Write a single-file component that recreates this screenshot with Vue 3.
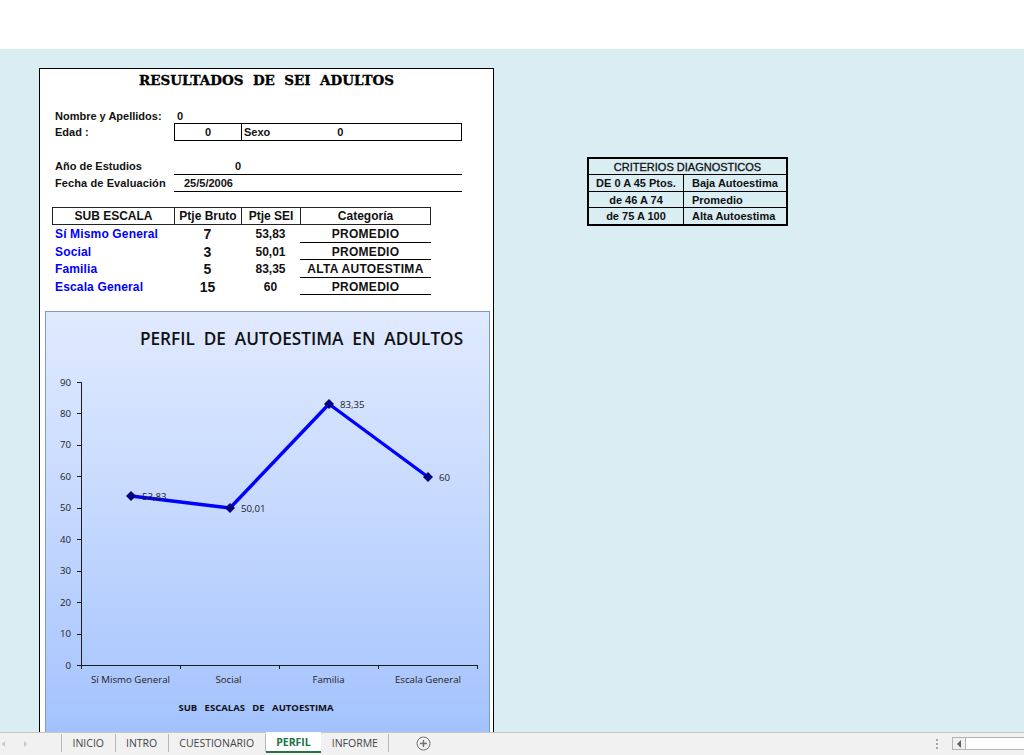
<script setup>
const rows = [
  { name: 'Sí Mismo General', raw: 7, sei: '53,83', cat: 'PROMEDIO' },
  { name: 'Social', raw: 3, sei: '50,01', cat: 'PROMEDIO' },
  { name: 'Familia', raw: 5, sei: '83,35', cat: 'ALTA AUTOESTIMA' },
  { name: 'Escala General', raw: 15, sei: '60', cat: 'PROMEDIO' }
]

const criterios = [
  ['DE 0 A 45 Ptos.', 'Baja Autoestima'],
  ['de 46 A 74', 'Promedio'],
  ['de 75 A 100', 'Alta Autoestima']
]

const tabs = ['INICIO', 'INTRO', 'CUESTIONARIO', 'PERFIL', 'INFORME']

// chart geometry, in page pixels (the svg viewBox starts at the chart corner)
const axisX = 81
const axisY = 665
const stepY = 31.44
const stepX = 99
const ticksY = [0, 10, 20, 30, 40, 50, 60, 70, 80, 90]
const pts = [
  { x: 131, y: 496, label: '53,83' },
  { x: 230, y: 508, label: '50,01' },
  { x: 329, y: 404, label: '83,35' },
  { x: 428, y: 477, label: '60' }
]
const linePoints = pts.map(p => `${p.x},${p.y}`).join(' ')
const cats = [
  { x: 130.5, t: 'Sí Mismo General' },
  { x: 228.5, t: 'Social' },
  { x: 328.5, t: 'Familia' },
  { x: 428, t: 'Escala General' }
]
</script>

<template>
  <div class="window">
    <div class="topbar"></div>

    <div class="workspace">
      <section class="sheet">
        <h1 class="title">RESULTADOS&nbsp; DE&nbsp; SEI&nbsp; ADULTOS</h1>

        <div class="info">
          <div class="info-row first">
            <span class="lbl">Nombre y Apellidos:</span>
            <span class="zero-left">0</span>
          </div>
          <div class="info-row">
            <span class="lbl">Edad :</span>
            <div class="edad-box">
              <span class="edad-val">0</span>
              <span class="sexo"><span>Sexo</span><span class="sexo-val">0</span></span>
            </div>
          </div>
          <div class="info-row spaced">
            <span class="lbl">Año de Estudios</span>
            <span class="underlined centered-zero">0</span>
          </div>
          <div class="info-row">
            <span class="lbl wide">Fecha de Evaluación</span>
            <span class="underlined fecha">25/5/2006</span>
          </div>
        </div>

        <div class="scores">
          <div class="score-head">
            <span>SUB ESCALA</span>
            <span>Ptje Bruto</span>
            <span>Ptje SEI</span>
            <span>Categoría</span>
          </div>
          <div v-for="r in rows" :key="r.name" class="score-row">
            <span class="sc-name">{{ r.name }}</span>
            <span class="sc-raw">{{ r.raw }}</span>
            <span class="sc-sei">{{ r.sei }}</span>
            <span class="sc-cat">{{ r.cat }}</span>
          </div>
        </div>

        <div class="chart">
          <svg class="chart-svg" viewBox="46 312 443 420" width="443" height="420">
            <defs>
              <linearGradient id="chartBg" x1="0" y1="0" x2="0" y2="1">
                <stop offset="0" stop-color="#e0eaff" />
                <stop offset="0.5" stop-color="#c4d8fe" />
                <stop offset="1" stop-color="#a3c2fd" />
              </linearGradient>
            </defs>
            <rect x="46" y="312" width="443" height="420" fill="url(#chartBg)" />

            <text x="301.5" y="345" class="chart-title" text-anchor="middle">PERFIL&nbsp; DE&nbsp; AUTOESTIMA&nbsp; EN&nbsp; ADULTOS</text>

            <g stroke="#1c1c1c" stroke-width="1" fill="none">
              <path :d="`M${axisX + 0.5} ${axisY - 9 * stepY} V${axisY + 0.5} H${axisX + 4 * stepX}`" />
              <path v-for="t in ticksY" :key="t" :d="`M${axisX - 4} ${Math.round(axisY - (t / 10) * stepY) + 0.5} h4`" />
              <path v-for="i in 5" :key="i" :d="`M${axisX + (i - 1) * stepX + 0.5} ${axisY} v4`" />
            </g>

            <text v-for="t in ticksY" :key="'l' + t" x="71" :y="axisY - (t / 10) * stepY + 3.5" class="axis-text" text-anchor="end">{{ t }}</text>
            <text v-for="c in cats" :key="c.t" :x="c.x" y="683" class="axis-text" text-anchor="middle">{{ c.t }}</text>
            <text x="256" y="711" class="axis-title" text-anchor="middle">SUB&nbsp;&nbsp;&nbsp;ESCALAS&nbsp;&nbsp;&nbsp;DE&nbsp;&nbsp;&nbsp;AUTOESTIMA</text>

            <polyline :points="linePoints" fill="none" stroke="#0000ff" stroke-width="3.4" stroke-linejoin="round" />
            <path v-for="p in pts" :key="p.x" :d="`M${p.x - 5} ${p.y} L${p.x} ${p.y - 5} L${p.x + 5} ${p.y} L${p.x} ${p.y + 5} Z`" fill="#000080" />
            <text v-for="p in pts" :key="'v' + p.x" :x="p.x + 11" :y="p.y + 4" class="axis-text">{{ p.label }}</text>
          </svg>
        </div>
      </section>

      <section class="criterios">
        <div class="crit-head">CRITERIOS DIAGNOSTICOS</div>
        <div v-for="c in criterios" :key="c[0]" class="crit-row">
          <span class="crit-a">{{ c[0] }}</span>
          <span class="crit-b">{{ c[1] }}</span>
        </div>
      </section>
    </div>

    <footer class="tabbar">
      <div class="nav">
        <span class="nav-l"></span>
        <span class="nav-r"></span>
      </div>
      <div class="tabs">
        <span v-for="t in tabs" :key="t" class="tab" :class="{ active: t === 'PERFIL' }">{{ t }}</span>
      </div>
      <svg class="add" width="15" height="15" viewBox="0 0 15 15">
        <circle cx="7.5" cy="7.5" r="6.5" fill="none" stroke="#6f6f6f" stroke-width="1" />
        <path d="M7.5 4v7M4 7.5h7" stroke="#6f6f6f" stroke-width="1.4" fill="none" />
      </svg>
      <div class="spacer"></div>
      <div class="dots"><i></i><i></i><i></i></div>
      <div class="hscroll">
        <span class="hs-btn"><span class="hs-arrow"></span></span>
      </div>
    </footer>
  </div>
</template>

<style>
html, body {
  margin: 0;
  background: #fff;
}
</style>

<style scoped>
.window {
  width: 1024px;
  height: 755px;
  display: flex;
  flex-direction: column;
  overflow: hidden;
  font-family: "Liberation Sans", Arial, sans-serif;
  color: #111;
}
.topbar {
  height: 49px;
  background: #fff;
}
.workspace {
  flex: 1;
  min-height: 0;
  display: flex;
  align-items: stretch;
  padding: 19px 0 0 39px;
  background: #daedf3;
  overflow: hidden;
}

/* results sheet */
.sheet {
  width: 455px;
  box-sizing: border-box;
  border: 1px solid #000;
  border-bottom: 0;
  background: #fff;
  display: flex;
  flex-direction: column;
}
.title {
  margin: 0;
  height: 37px;
  padding-top: 1px;
  box-sizing: border-box;
  text-align: center;
  font-family: "DejaVu Serif", serif;
  font-size: 13.5px;
  line-height: 20px;
  font-weight: 700;
  color: #000;
  -webkit-text-stroke: 0.35px #000;
}
.info {
  font-size: 11px;
  font-weight: 700;
  padding-left: 15px;
}
.info-row {
  display: grid;
  grid-template-columns: 119px 288px;
  height: 17px;
  line-height: 19px;
}
.info-row.first {
  line-height: 21px;
}
.info-row.spaced {
  margin-top: 17px;
}
.lbl.wide {
  letter-spacing: 0.1px;
}
.zero-left {
  padding-left: 3px;
}
.edad-box {
  display: grid;
  grid-template-columns: 67px 1fr;
  box-sizing: border-box;
  height: 18px;
  border: 1px solid #000;
  line-height: 17px;
}
.edad-val {
  text-align: center;
  border-right: 1px solid #000;
}
.sexo {
  padding-left: 2px;
  display: flex;
}
.sexo-val {
  margin-left: 67px;
}
.underlined {
  border-bottom: 1px solid #000;
  box-sizing: border-box;
  height: 18px;
}
.centered-zero {
  padding-left: 61px;
}
.fecha {
  padding-left: 10px;
  font-weight: 700;
}

/* subscale table */
.scores {
  margin: 16px 0 0 12px;
  width: 379px;
}
.score-head,
.score-row {
  display: grid;
  grid-template-columns: 122px 67px 59px 131px;
  text-align: center;
  font-weight: 700;
}
.score-head {
  grid-template-columns: 121px 67px 59px 130px;
  box-sizing: border-box;
  height: 18px;
  border: 1px solid #222;
  line-height: 16px;
  font-size: 12px;
}
.score-head span + span {
  border-left: 1px solid #222;
}
.score-row {
  grid-template-rows: 17.5px;
  height: 17.5px;
  line-height: 19px;
  font-size: 12px;
}
.sc-name {
  color: #0000ff;
  text-align: left;
  padding-left: 3px;
  letter-spacing: 0.15px;
}
.sc-raw {
  font-size: 14px;
}
.sc-cat {
  border-bottom: 1px solid #000;
  box-sizing: border-box;
  letter-spacing: 0.3px;
}

/* chart */
.chart {
  margin: 16px 0 0 5px;
  width: 445px;
  flex: 1;
  min-height: 0;
  box-sizing: border-box;
  border: 1px solid #7d9cc0;
  border-bottom: 0;
  overflow: hidden;
}
.chart-svg {
  display: block;
}
.chart-title {
  font-family: "Open Sans", sans-serif;
  font-size: 17.2px;
  font-weight: 600;
  fill: #111;
}
.axis-text {
  font-family: "Open Sans", sans-serif;
  font-size: 9.7px;
  fill: #222;
}
.axis-title {
  font-family: "Open Sans", sans-serif;
  font-size: 9.5px;
  font-weight: 700;
  fill: #111;
}

/* criteria table */
.criterios {
  align-self: flex-start;
  margin: 89px 0 0 93px;
  width: 201px;
  box-sizing: border-box;
  border: 2px solid #000;
  font-size: 11px;
  font-weight: 700;
  background: #daedf3;
}
.crit-head {
  height: 15px;
  line-height: 16px;
  text-align: center;
  font-weight: 400;
  -webkit-text-stroke: 0.3px #111;
}
.crit-row {
  display: grid;
  grid-template-columns: 95px 1fr;
  height: 16.5px;
  line-height: 17px;
  border-top: 1px solid #000;
  box-sizing: border-box;
}
.crit-a {
  text-align: center;
  border-right: 1px solid #000;
}
.crit-b {
  padding-left: 8px;
}

/* bottom sheet tabs */
.tabbar {
  height: 23px;
  box-sizing: border-box;
  display: flex;
  align-items: stretch;
  background: #f1f1f1;
  border-top: 1px solid #c6c6c6;
}
.nav {
  width: 61px;
  display: flex;
  align-items: center;
  padding-left: 2px;
  gap: 19px;
  box-sizing: border-box;
}
.nav-l,
.nav-r {
  width: 0;
  height: 0;
  border-top: 3px solid transparent;
  border-bottom: 3px solid transparent;
}
.nav-l {
  border-right: 3px solid #c4c4c4;
}
.nav-r {
  border-left: 3px solid #c4c4c4;
}
.tabs {
  display: flex;
  height: 18px;
  margin-top: 1px;
  border-left: 1px solid #b8b8b8;
}
.tab {
  padding: 0 10.5px;
  font-family: "Open Sans", sans-serif;
  font-size: 10.5px;
  line-height: 18px;
  color: #444;
  border-right: 1px solid #b8b8b8;
}
.tab.active {
  height: 21px;
  margin-top: -2px;
  box-sizing: border-box;
  line-height: 20px;
  background: #fff;
  color: #217346;
  font-weight: 700;
  border-right: 0;
  border-bottom: 2px solid #217346;
}
.add {
  margin: 3px 0 0 27px;
}
.spacer {
  flex: 1;
}
.dots {
  width: 14px;
  margin-right: 8px;
  display: flex;
  flex-direction: column;
  align-items: center;
  justify-content: center;
  gap: 2px;
}
.dots i {
  width: 2px;
  height: 2px;
  background: #a8a8a8;
}
.hscroll {
  width: 72px;
  height: 13px;
  margin-top: 4px;
  box-sizing: border-box;
  border: 1px solid #b4b4b4;
  border-right: 0;
  background: #fff;
}
.hs-btn {
  display: flex;
  align-items: center;
  justify-content: center;
  width: 12px;
  height: 11px;
  background: #f1f1f1;
  border-right: 1px solid #b4b4b4;
}
.hs-arrow {
  width: 0;
  height: 0;
  border-top: 4px solid transparent;
  border-bottom: 4px solid transparent;
  border-right: 4px solid #606060;
}
</style>
